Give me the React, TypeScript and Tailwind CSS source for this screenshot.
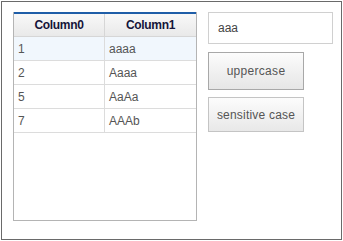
import React from "react";

const rows = [
  ["1", "aaaa"],
  ["2", "Aaaa"],
  ["5", "AaAa"],
  ["7", "AAAb"],
];

export default function App() {
  return (
    <div className="w-[343px] h-[241px] bg-white p-px" style={{ fontFamily: '"Liberation Sans", Arial, sans-serif' }}>
      <div className="w-[341px] h-[239px] border border-[#6a6a6a] flex pl-[11px] pt-[10px] gap-[11px] bg-white">
        <div className="w-[184px] h-[209px] border border-[#b4b4b4] border-t-0 flex flex-col">
          <div className="h-[25px] flex border-t-2 border-t-[#1f5ea8] bg-gradient-to-b from-[#f8f8f8] to-[#e9e9e9] border-b border-b-[#d6d6d6]">
            <div className="w-[91px] border-r border-[#d6d6d6] flex items-center justify-center text-[12px] tracking-[-0.3px] font-bold text-[#15153a]">Column0</div>
            <div className="flex-1 flex items-center justify-center text-[12px] tracking-[-0.3px] font-bold text-[#15153a]">Column1</div>
          </div>
          {rows.map((r, i) => (
            <div key={i} className={`h-[24px] flex border-b border-[#dcdcdc] text-[12px] text-[#555] ${i === 0 ? "bg-[#f1f7fd]" : "bg-white"}`}>
              <div className="w-[91px] border-r border-[#dcdcdc] flex items-center pl-[4px]">{r[0]}</div>
              <div className="flex-1 flex items-center pl-[4px]">{r[1]}</div>
            </div>
          ))}
        </div>
        <div className="flex flex-col">
          <div className="w-[125px] h-[32px] border border-[#d0d0d0] flex items-center pl-[9px] text-[12px] text-[#444]">aaa</div>
          <button className="mt-[8px] w-[96px] h-[38px] border border-[#a8a8a8] bg-gradient-to-b from-[#fcfcfc] to-[#e6e6e6] text-[12px] tracking-[0.3px] text-[#555] flex items-center justify-center">uppercase</button>
          <button className="mt-[7px] w-[96px] h-[35px] border border-[#c4c4c4] bg-gradient-to-b from-[#fcfcfc] to-[#e8e8e8] text-[12px] tracking-[0.2px] text-[#555] flex items-center justify-center">sensitive case</button>
        </div>
      </div>
    </div>
  );
}
